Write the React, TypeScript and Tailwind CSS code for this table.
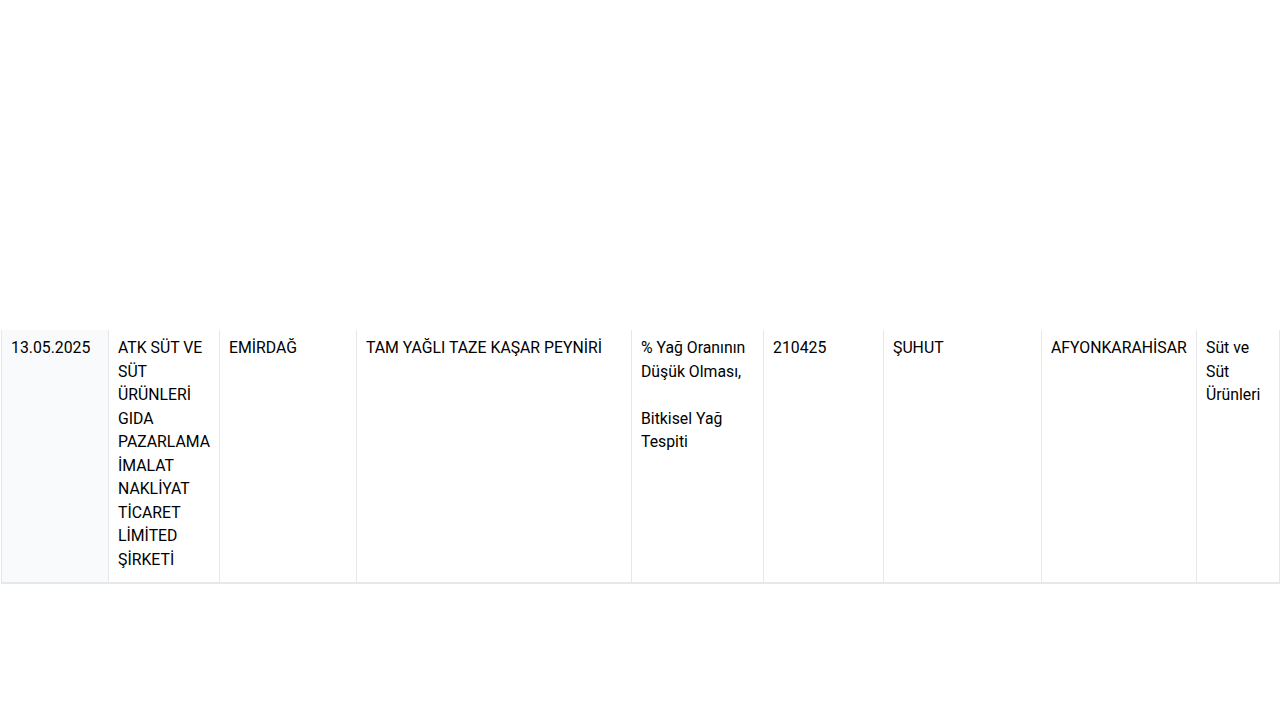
const row = {
  date: "13.05.2025",
  company: "ATK SÜT VE SÜT ÜRÜNLERİ GIDA PAZARLAMA İMALAT NAKLİYAT TİCARET LİMİTED ŞİRKETİ",
  district: "EMİRDAĞ",
  product: "TAM YAĞLI TAZE KAŞAR PEYNİRİ",
  batch: "210425",
  prodDistrict: "ŞUHUT",
  city: "AFYONKARAHİSAR",
  group: "Süt ve Süt Ürünleri",
};

const cell = "border border-t-0 border-[#e5e7eb] px-[9px] pt-[6px] pb-[11px] align-top";

export default function App() {
  return (
    <div className="min-h-screen bg-white pt-[330px] font-['Roboto',sans-serif] text-[15.8px] leading-[23.5px] text-black">
      <div className="pl-px">
        <table className="w-[1278px] table-fixed border-collapse">
          <colgroup>
            <col className="w-[107px]" />
            <col className="w-[111px]" />
            <col className="w-[137px]" />
            <col className="w-[275px]" />
            <col className="w-[132px]" />
            <col className="w-[120px]" />
            <col className="w-[158px]" />
            <col className="w-[155px]" />
            <col className="w-[83px]" />
          </colgroup>
          <tbody>
            <tr className="border-b-2 border-[#e5e7eb]">
              <td className={`${cell} bg-[#f9fafb]`}>{row.date}</td>
              <td className={cell}>{row.company}</td>
              <td className={cell}>{row.district}</td>
              <td className={cell}>{row.product}</td>
              <td className={cell}>
                % Yağ Oranının Düşük Olması,
                <br />
                <br />
                Bitkisel Yağ Tespiti
              </td>
              <td className={cell}>{row.batch}</td>
              <td className={cell}>{row.prodDistrict}</td>
              <td className={cell}>{row.city}</td>
              <td className={cell}>{row.group}</td>
            </tr>
          </tbody>
        </table>
      </div>
    </div>
  );
}
